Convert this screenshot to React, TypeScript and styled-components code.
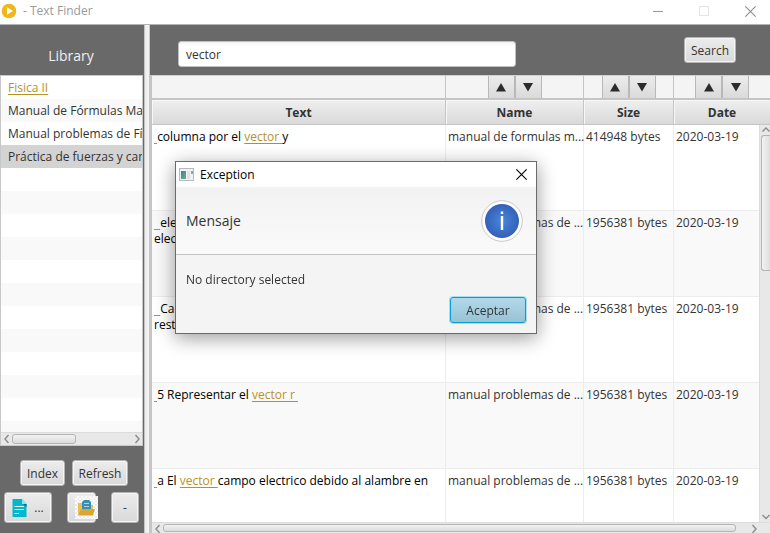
import React from "react";
import styled, { createGlobalStyle, css } from "styled-components";

const GlobalStyle = createGlobalStyle`
  *, *::before, *::after { box-sizing: border-box; }
  body { margin: 0; overflow: hidden; }
  body, button, input { font-family: "Open Sans", "Noto Sans", sans-serif; font-size: 12px; }
  button { margin: 0; padding: 0; border: 0; background: none; color: inherit; }
`;

const Window = styled.div`
  display: flex;
  flex-direction: column;
  height: 100vh;
  background: #fff;
  color: #333;
  line-height: 16px;
`;

const TitleBar = styled.header`
  display: flex;
  align-items: center;
  gap: 6px;
  height: 25px;
  flex: none;
  padding-bottom: 2px;
  border-bottom: 1px solid #b4b4b4;
  color: #999;
  svg { display: block; }
`;

const AppTitle = styled.h1`
  flex: 1;
  margin: 0;
  font-size: 12px;
  font-weight: 400;
`;

const WindowButton = styled.button`
  display: grid;
  place-items: center;
  width: 40px;
  height: 20px;
`;

const WindowButtons = styled.div`
  display: flex;
  gap: 6px;
`;

const Body = styled.div`
  display: flex;
  flex: 1;
  min-height: 0;
`;

const Sidebar = styled.aside`
  display: flex;
  flex-direction: column;
  flex: none;
  width: 144px;
  background: #696969;
`;

const SidebarTitle = styled.h2`
  height: 50px;
  margin: 0;
  padding: 21px 2px 0 0;
  color: #f0f0f0;
  font-size: 14px;
  font-weight: 400;
  line-height: 20px;
  text-align: center;
`;

const ListFrame = styled.div`
  display: flex;
  flex-direction: column;
  flex: 1;
  min-height: 0;
  margin-right: 1px;
  border: 1px solid #c8c8c8;
  background: #fff;
`;

const List = styled.ul`
  flex: 1;
  min-height: 0;
  margin: 0;
  padding: 0;
  overflow: hidden;
  list-style: none;
`;

const ListItem = styled.li<{ $selected?: boolean }>`
  height: 23px;
  padding: 4px 0 0 7px;
  overflow: hidden;
  white-space: nowrap;
  &:nth-child(even) { background: #f9f9f9; }
  ${(p) => p.$selected && css`&&:nth-child(n) { background: #d3d3d3; }`}
`;

const Link = styled.a`
  color: #b8921f;
  text-decoration: underline;
  text-underline-offset: 2px;
`;

const SidebarActions = styled.div`
  display: flex;
  flex-direction: column;
  gap: 6px;
  flex: none;
  height: 87px;
  padding: 14px 4px 0;
`;

const ActionRow = styled.div<{ $gap: number; $indent?: number }>`
  display: flex;
  align-items: center;
  gap: ${(p) => p.$gap}px;
  padding-left: ${(p) => p.$indent ?? 0}px;
  svg { display: block; flex: none; }
`;

const Button = styled.button<{ $width: number; $tall?: boolean; $primary?: boolean; $start?: boolean }>`
  display: flex;
  align-items: center;
  justify-content: ${(p) => (p.$start ? "flex-start" : "center")};
  gap: 7px;
  width: ${(p) => p.$width}px;
  height: ${(p) => (p.$tall ? 31 : 26)}px;
  padding-left: ${(p) => (p.$start ? 7 : 0)}px;
  border: 1px solid #b4b4b4;
  border-radius: 3px;
  background: linear-gradient(#ececec, #d9d9d9);
  box-shadow: inset 0 0 0 1px #f5f5f5;
  color: #333;
  ${(p) =>
    p.$primary &&
    css`
      border-color: #039ed3;
      background: linear-gradient(#b1d9ea, #98c2d5);
      box-shadow: 0 0 0 1px #a5dff3;
    `}
`;

const Divider = styled.div`
  flex: none;
  width: 6px;
  border-left: 1px solid #c4c4c4;
  border-right: 1px solid #c8c8c8;
  background: linear-gradient(90deg, #ececec, #f4f4f4);
`;

const Main = styled.main`
  display: flex;
  flex-direction: column;
  flex: 1;
  min-width: 0;
`;

const SearchBar = styled.form`
  display: flex;
  align-items: center;
  justify-content: space-between;
  flex: none;
  height: 50px;
  padding: 0 34px 0 28px;
  background: #696969;
`;

const SearchInput = styled.input`
  flex: 0 1 338px;
  min-width: 0;
  height: 26px;
  margin-top: 8px;
  padding: 0 7px;
  border: 1px solid #c0c0c0;
  border-radius: 3px;
  outline: none;
  background: linear-gradient(#f2f2f2, #fff 4px);
  color: #333;
`;

const TablePanel = styled.div`
  position: relative;
  display: flex;
  flex-direction: column;
  flex: 1;
  min-height: 0;
  border-left: 2px solid #c5c5c5;
`;

const TableClip = styled.div`
  flex: 1;
  min-height: 0;
  overflow: hidden;
`;

const Table = styled.table`
  width: 100%;
  table-layout: fixed;
  border-collapse: separate;
  border-spacing: 0;
`;

const Col = styled.col<{ $width?: number }>`
  width: ${(p) => (p.$width ? `${p.$width}px` : "auto")};
`;

const SortCell = styled.td`
  height: 25px;
  padding: 0;
  border-top: 1px solid #d0d0d0;
  border-bottom: 2px solid #c5c5c5;
  border-right: 1px solid #c5c5c5;
  background: #f4f4f4;
  &:last-child { border-right: 0; }
`;

const SortButtons = styled.div`
  display: flex;
  justify-content: center;
`;

const SortButton = styled.button`
  display: grid;
  place-items: center;
  width: 27px;
  height: 22px;
  border: 1px solid #b8b8b8;
  border-width: 0 1px;
  background: linear-gradient(#ececec, #dadada);
`;

const HeadCell = styled.th`
  height: 25px;
  padding: 2px 0 0;
  border-right: 1px solid #c5c5c5;
  border-bottom: 1px solid #c5c5c5;
  background: linear-gradient(#efefef, #d9d9d9);
  box-shadow: inset 1px 1px 0 #f7f7f7;
  font-weight: 700;
  &:last-child { border-right: 0; }
`;

const Row = styled.tr`
  &:nth-child(even) { background: #f9f9f9; }
`;

const Cell = styled.td<{ $dark?: boolean }>`
  height: 86px;
  padding: 4px 0 4px 2px;
  border-right: 1px solid #ededed;
  border-bottom: 1px solid #ededed;
  color: ${(p) => (p.$dark ? "#000" : "#333")};
  vertical-align: top;
  white-space: pre;
`;

const VScroll = styled.div`
  position: absolute;
  top: 50px;
  right: 0;
  bottom: 11px;
  display: flex;
  flex-direction: column;
  width: 11px;
  border-left: 1px solid #dcdcdc;
  background: #e8e8e8;
`;

const HScroll = styled.div<{ $height: number; $corner?: number }>`
  display: flex;
  align-items: stretch;
  flex: none;
  height: ${(p) => p.$height}px;
  padding: 1px ${(p) => p.$corner ?? 0}px 1px 0;
  border-top: 1px solid #dcdcdc;
  background: #e8e8e8;
`;

const ScrollTrack = styled.div<{ $vertical?: boolean }>`
  display: flex;
  flex: 1;
  flex-direction: ${(p) => (p.$vertical ? "column" : "row")};
`;

const ScrollArrow = styled.button`
  display: grid;
  place-items: center;
  flex: none;
  width: 11px;
  min-height: 8px;
`;

const Thumb = styled.div<{ $size: string; $vertical?: boolean }>`
  flex: 0 0 ${(p) => p.$size};
  border: 1px solid #b4b4b4;
  border-radius: 3px;
  background: linear-gradient(#f2f2f2, #dcdcdc);
  ${(p) =>
    p.$vertical &&
    css`
      margin-left: 1px;
      border-right: 0;
      border-radius: 3px 0 0 3px;
      background: linear-gradient(90deg, #f2f2f2, #dedede);
    `}
`;

const DialogWindow = styled.section`
  position: fixed;
  top: 161px;
  left: 175px;
  width: 362px;
  border: 1px solid #6b6b6b;
  background: #f4f4f4;
  box-shadow: 0 4px 18px rgba(0, 0, 0, 0.4);
  color: #333;
  line-height: 16px;
`;

const DialogTitle = styled.div`
  display: flex;
  align-items: center;
  gap: 6px;
  height: 25px;
  padding: 0 3px;
  background: #fff;
  color: #000;
  h2 { flex: 1; margin: 0; font-size: 12px; font-weight: 400; }
`;

const CloseButton = styled.button`
  display: grid;
  place-items: center;
  width: 24px;
  height: 24px;
`;

const DialogHeader = styled.div`
  display: flex;
  align-items: center;
  justify-content: space-between;
  height: 68px;
  padding: 0 13px 0 10px;
  border-bottom: 1px solid #c2c2c2;
  background: linear-gradient(#f2f2f2, #fafafa);
  font-size: 14px;
`;

const DialogBody = styled.div`
  display: flex;
  flex-direction: column;
  height: 78px;
  padding: 17px 10px 10px;
  p { margin: 0; }
  button { align-self: flex-end; margin-top: auto; }
`;

const arrowPaths = {
  left: "M6.500 1 L3 5 L6.500 9",
  right: "M3.500 1 L7 5 L3.500 9",
  up: "M1.500 6.500 L5 3 L8.500 6.500",
  down: "M1.500 3 L5 6.500 L8.500 3",
};

function Chevron({ dir }: { dir: keyof typeof arrowPaths }) {
  return (
    <svg width="10" height="10" viewBox="0 0 10 10" fill="none" stroke="#8c8c8c" strokeWidth="1.4">
      <path d={arrowPaths[dir]} />
    </svg>
  );
}

function Triangle({ down }: { down?: boolean }) {
  return (
    <svg width="10" height="10" viewBox="0 0 10 10" fill="#2b2b2b">
      <path d={down ? "M0 1H10L5 9.500Z" : "M0 9.500H10L5 1Z"} />
    </svg>
  );
}

function Cross({ color, size }: { color: string; size: number }) {
  return (
    <svg width={size} height={size} viewBox="0 0 10 10" stroke={color} strokeWidth="1">
      <path d="M0.300 0.300L9.700 9.700M9.700 0.300L0.300 9.700" />
    </svg>
  );
}

function PlayLogo() {
  return (
    <svg width="17" height="16" viewBox="0 0 17 16">
      <circle cx="9" cy="8" r="7.300" fill="#efb818" />
      <path d="M7 4.200L13 8L7 11.800Z" fill="#fff" />
    </svg>
  );
}

function FileIcon() {
  return (
    <svg width="15" height="18" viewBox="0 0 15 18">
      <path d="M0.500 0H10L14.500 5V18H0.500Z" fill="#00b7cc" />
      <path d="M10 0L14.500 5H10Z" fill="#8be4ee" />
      <path d="M11 5H14.500V8Z" fill="#00707d" />
      <path d="M2.500 7.500H12M2.500 10.500H12M2.500 14.500H7" stroke="#fff" />
    </svg>
  );
}

function FolderIcon() {
  return (
    <svg width="23" height="23" viewBox="0 0 23 23">
      <defs>
        <pattern id="checker" width="4" height="4" patternUnits="userSpaceOnUse">
          <rect width="4" height="4" fill="#fff" />
          <path d="M0 0H2V2H0ZM2 2H4V4H2Z" fill="#ececec" />
        </pattern>
      </defs>
      <rect width="23" height="23" fill="url(#checker)" />
      <path d="M3 7H8L9 9H18V18H3Z" fill="#edc056" />
      <path d="M9 4H14L16 6V14H7V6Z" fill="#3a8fb0" />
      <path d="M9 7.500H14M9 10.500H14" stroke="#a9d3e2" />
      <path d="M6 13H20L18 19.500H3Z" fill="#dca531" />
    </svg>
  );
}

function DialogIcon() {
  return (
    <svg width="15" height="13" viewBox="0 0 15 13">
      <defs>
        <linearGradient id="screen" x2="1" y2="1">
          <stop stopColor="#4579a8" />
          <stop offset="1" stopColor="#63b57c" />
        </linearGradient>
      </defs>
      <rect x="0.500" y="0.500" width="14" height="12" fill="#f0f2f4" stroke="#b5bac0" />
      <rect x="2" y="3" width="5" height="8" fill="url(#screen)" />
      <rect x="8" y="3" width="3" height="8" fill="#dfe3e6" />
      <rect x="12" y="3" width="2" height="3" fill="#7fb3a7" />
    </svg>
  );
}

function InfoIcon() {
  return (
    <svg width="42" height="42" viewBox="0 0 42 42">
      <defs>
        <radialGradient id="info">
          <stop stopColor="#4787d9" />
          <stop offset="1" stopColor="#3460b9" />
        </radialGradient>
      </defs>
      <circle cx="21" cy="21" r="20.300" fill="#fff" stroke="#c9c9c9" />
      <circle cx="21" cy="21" r="17" fill="url(#info)" />
      <rect x="19.800" y="11.500" width="2.400" height="2.500" fill="#fff" />
      <rect x="19.800" y="16" width="2.400" height="14" fill="#fff" />
    </svg>
  );
}

const books = ["Manual de Fórmulas Matemáticas", "Manual problemas de Física", "Práctica de fuerzas y campos"];
const emptyRows = Array.from({ length: 12 }, (_, i) => i);

const results: { text: React.ReactNode; name: string; size: string }[] = [
  { text: <><Link href="#"> </Link>columna por el <Link href="#">vector </Link>y</>, name: "manual de formulas m...", size: "414948 bytes" },
  { text: <><Link href="#">{"  "}</Link>elec{"\n"}elec</>, name: "manual problemas de ...", size: "1956381 bytes" },
  { text: <><Link href="#">{"  "}</Link>Ca{"\n"}resta</>, name: "manual problemas de ...", size: "1956381 bytes" },
  { text: <><Link href="#"> </Link>5 Representar el <Link href="#">vector r </Link></>, name: "manual problemas de ...", size: "1956381 bytes" },
  { text: <><Link href="#"> </Link>a El <Link href="#">vector </Link>campo electrico debido al alambre en</>, name: "manual problemas de ...", size: "1956381 bytes" },
];

function SortPair({ column }: { column: string }) {
  return (
    <SortButtons>
      <SortButton type="button" aria-label={`Sort ${column} ascending`}><Triangle /></SortButton>
      <SortButton type="button" aria-label={`Sort ${column} descending`}><Triangle down /></SortButton>
    </SortButtons>
  );
}

function ResultsTable() {
  return (
    <TablePanel>
      <TableClip>
        <Table>
          <colgroup>
            <Col />
            <Col $width={138} />
            <Col $width={90} />
            <Col $width={96} />
          </colgroup>
          <thead>
            <tr>
              <SortCell />
              <SortCell><SortPair column="name" /></SortCell>
              <SortCell><SortPair column="size" /></SortCell>
              <SortCell><SortPair column="date" /></SortCell>
            </tr>
            <tr>
              <HeadCell scope="col">Text</HeadCell>
              <HeadCell scope="col">Name</HeadCell>
              <HeadCell scope="col">Size</HeadCell>
              <HeadCell scope="col">Date</HeadCell>
            </tr>
          </thead>
          <tbody>
            {results.map((r, i) => (
              <Row key={i}>
                <Cell $dark>{r.text}</Cell>
                <Cell>{r.name}</Cell>
                <Cell>{r.size}</Cell>
                <Cell>2020-03-19</Cell>
              </Row>
            ))}
          </tbody>
        </Table>
      </TableClip>
      <HScroll $height={11} $corner={11}>
        <ScrollArrow type="button" aria-label="Scroll left"><Chevron dir="left" /></ScrollArrow>
        <ScrollTrack><Thumb $size="98%" /></ScrollTrack>
        <ScrollArrow type="button" aria-label="Scroll right"><Chevron dir="right" /></ScrollArrow>
      </HScroll>
      <VScroll>
        <ScrollArrow type="button" aria-label="Scroll up"><Chevron dir="up" /></ScrollArrow>
        <ScrollTrack $vertical><Thumb $size="36%" $vertical /></ScrollTrack>
        <ScrollArrow type="button" aria-label="Scroll down"><Chevron dir="down" /></ScrollArrow>
      </VScroll>
    </TablePanel>
  );
}

export default function App() {
  return (
    <>
      <GlobalStyle />
      <Window>
        <TitleBar>
          <PlayLogo />
          <AppTitle>- Text Finder</AppTitle>
          <WindowButtons>
            <WindowButton type="button" aria-label="Minimize">
              <svg width="10" height="10" viewBox="0 0 10 10" stroke="#999"><path d="M0 5.500H10" /></svg>
            </WindowButton>
            <WindowButton type="button" aria-label="Maximize" disabled>
              <svg width="10" height="10" viewBox="0 0 10 10" fill="none" stroke="#e4e4e4"><path d="M0.500 0.500H9.500V9.500H0.500Z" /></svg>
            </WindowButton>
            <WindowButton type="button" aria-label="Close"><Cross color="#8c8c8c" size={11} /></WindowButton>
          </WindowButtons>
        </TitleBar>
        <Body>
          <Sidebar>
            <SidebarTitle>Library</SidebarTitle>
            <ListFrame>
              <List>
                <ListItem><Link href="#">Fisica II</Link></ListItem>
                {books.map((b, i) => <ListItem key={b} $selected={i === 2}>{b}</ListItem>)}
                {emptyRows.map((i) => <ListItem key={i} aria-hidden />)}
              </List>
              <HScroll $height={13}>
                <ScrollArrow type="button" aria-label="Scroll list left"><Chevron dir="left" /></ScrollArrow>
                <ScrollTrack><Thumb $size="54%" /></ScrollTrack>
                <ScrollArrow type="button" aria-label="Scroll list right"><Chevron dir="right" /></ScrollArrow>
              </HScroll>
            </ListFrame>
            <SidebarActions>
              <ActionRow $gap={7} $indent={16}>
                <Button type="button" $width={45}>Index</Button>
                <Button type="button" $width={56}>Refresh</Button>
              </ActionRow>
              <ActionRow $gap={15}>
                <Button type="button" $width={48} $tall><FileIcon />...</Button>
                <Button type="button" $width={29} $tall $start aria-label="Open folder"><FolderIcon /></Button>
                <Button type="button" $width={28} $tall>-</Button>
              </ActionRow>
            </SidebarActions>
          </Sidebar>
          <Divider />
          <Main>
            <SearchBar onSubmit={(e) => e.preventDefault()}>
              <SearchInput aria-label="Search text" defaultValue="vector" />
              <Button type="submit" $width={52}>Search</Button>
            </SearchBar>
            <ResultsTable />
          </Main>
        </Body>
      </Window>
      <DialogWindow role="dialog" aria-labelledby="dialog-title">
        <DialogTitle>
          <DialogIcon />
          <h2 id="dialog-title">Exception</h2>
          <CloseButton type="button" aria-label="Close dialog"><Cross color="#000" size={11} /></CloseButton>
        </DialogTitle>
        <DialogHeader>
          <span>Mensaje</span>
          <InfoIcon />
        </DialogHeader>
        <DialogBody>
          <p>No directory selected</p>
          <Button type="button" $width={76} $primary>Aceptar</Button>
        </DialogBody>
      </DialogWindow>
    </>
  );
}
